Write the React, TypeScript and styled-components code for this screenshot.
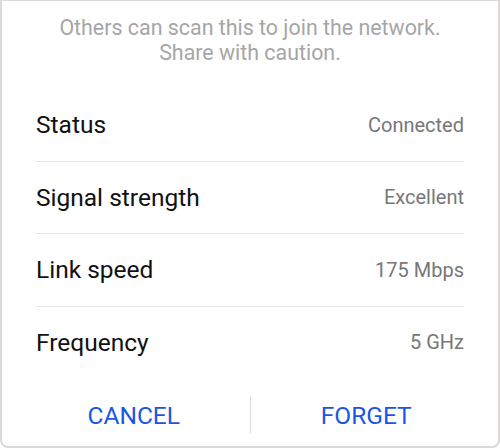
import React from 'react';
import styled, { createGlobalStyle } from 'styled-components';

const GlobalStyle = createGlobalStyle`
  html, body {
    margin: 0;
    padding: 0;
    background: #ffffff;
  }
  body {
    font-family: Roboto, "Noto Sans", sans-serif;
  }
`;

const Dialog = styled.div`
  box-sizing: border-box;
  width: 500px;
  height: 448px;
  background: #ffffff;
  border: 2px solid #dcd9d6;
  border-top-width: 1px;
  border-radius: 0 0 8px 8px;
  display: flex;
  flex-direction: column;
`;

const Notice = styled.p`
  margin: 14px 0 0;
  text-align: center;
  color: #a6a6a6;
  font-size: 21.4px;
  line-height: 25px;
`;

const List = styled.div`
  margin: 24px 34px 0;
  display: flex;
  flex-direction: column;
`;

const Row = styled.div<{ $last?: boolean }>`
  height: 71.5px;
  display: flex;
  align-items: center;
  justify-content: space-between;
  border-bottom: ${({ $last }) => ($last ? 'none' : '1px solid #e6e6e6')};
`;

const Label = styled.span`
  color: #111111;
  font-size: 24.5px;
`;

const Value = styled.span`
  color: #777777;
  font-size: 20px;
`;

const Actions = styled.div`
  margin-top: auto;
  margin-bottom: 13px;
  padding: 0 16px;
  display: grid;
  grid-template-columns: 1fr 1px 1fr;
  align-items: center;
`;

const Action = styled.button`
  background: none;
  border: none;
  padding: 0;
  height: 36px;
  font-family: Roboto, "Noto Sans", sans-serif;
  font-size: 24.5px;
  color: #1a56e4;
  cursor: pointer;
`;

const Separator = styled.div`
  width: 1px;
  height: 36px;
  background: #dadada;
`;

const details = [
  { label: 'Status', value: 'Connected' },
  { label: 'Signal strength', value: 'Excellent' },
  { label: 'Link speed', value: '175 Mbps' },
  { label: 'Frequency', value: '5 GHz' },
];

export default function App(): JSX.Element {
  return (
    <>
      <GlobalStyle />
      <Dialog>
        <Notice>
          Others can scan this to join the network.
          <br />
          Share with caution.
        </Notice>
        <List>
          {details.map((d, i) => (
            <Row key={d.label} $last={i === details.length - 1}>
              <Label>{d.label}</Label>
              <Value>{d.value}</Value>
            </Row>
          ))}
        </List>
        <Actions>
          <Action type="button">CANCEL</Action>
          <Separator />
          <Action type="button">FORGET</Action>
        </Actions>
      </Dialog>
    </>
  );
}
